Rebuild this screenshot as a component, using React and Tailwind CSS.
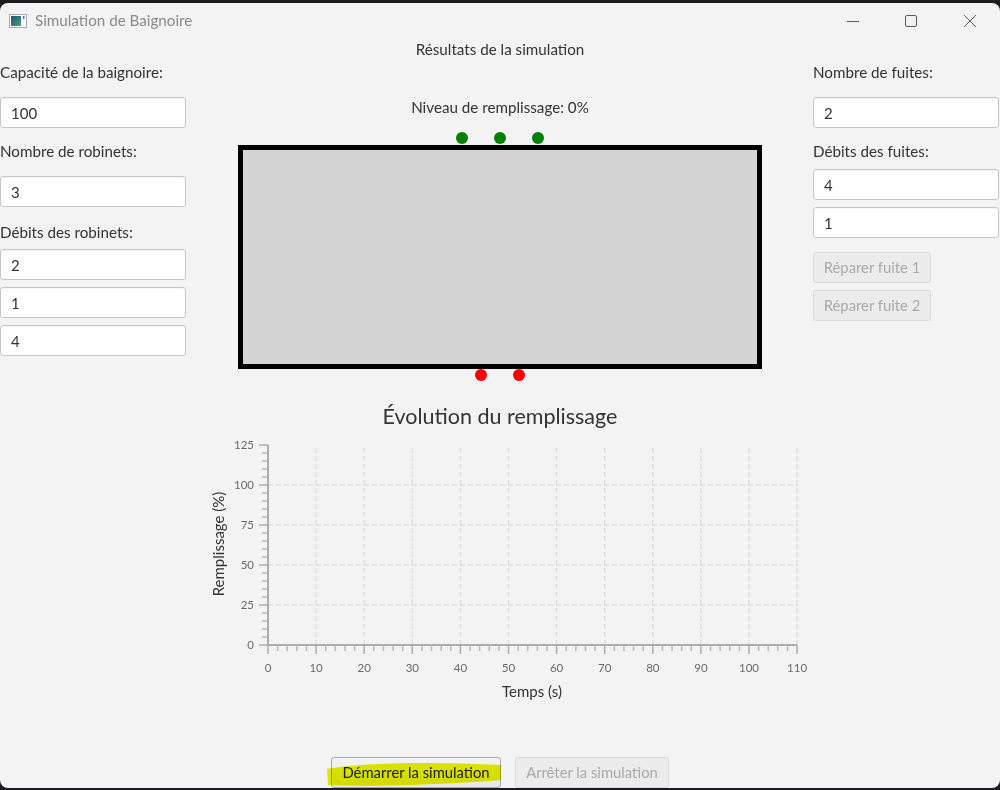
import React from 'react';

const X0 = 81;
const Y0 = 212;
const SX = 4.81;
const SY = 1.6;
const xPos = (v) => X0 + v * SX;
const yPos = (v) => Y0 - v * SY;

const Field = ({ value }) => (
  <input
    readOnly
    value={value}
    className="h-[31px] w-[186px] rounded-[3px] border border-[#c6c6c6] bg-white pl-[10px] text-[15px] text-[#333] shadow-[inset_0_1px_1px_rgba(0,0,0,0.04)] outline-none"
  />
);

const Label = ({ children, className = '' }) => (
  <div className={`h-[20px] text-[15.2px] leading-[20px] text-[#333] ${className}`}>{children}</div>
);

const Dot = ({ color }) => <span className={`block h-[12px] w-[12px] rounded-full ${color}`}></span>;

const DisabledButton = ({ children, className = '' }) => (
  <div
    className={`flex h-[31px] items-center justify-center rounded-[3px] border border-[#dadada] bg-[#ececec] text-[14.8px] text-[#a9a9a9] ${className}`}
  >
    {children}
  </div>
);

const Chart = () => {
  const xMajor = [];
  for (let v = 0; v <= 110; v += 10) xMajor.push(v);
  const xMinor = [];
  for (let v = 0; v <= 110; v += 2) if (v % 10 !== 0) xMinor.push(v);
  const yMajor = [0, 25, 50, 75, 100, 125];
  const yMinor = [];
  for (let v = 0; v <= 125; v += 5) if (v % 25 !== 0) yMinor.push(v);

  return (
    <svg width="626" height="280" className="block">
      {/* grid */}
      {[25, 50, 75, 100].map((v) => (
        <line key={`h${v}`} x1={X0} x2={xPos(110)} y1={yPos(v)} y2={yPos(v)} stroke="#dedede" strokeWidth="1.5" strokeDasharray="5 3" />
      ))}
      {xMajor.slice(1).map((v) => (
        <line key={`v${v}`} x1={xPos(v)} x2={xPos(v)} y1={Y0} y2={yPos(125)} stroke="#dedede" strokeWidth="1.5" strokeDasharray="5 3" />
      ))}

      {/* y axis */}
      <line x1={X0} x2={X0} y1={yPos(125)} y2={Y0 + 1} stroke="#adadad" strokeWidth="2" />
      {yMajor.map((v) => (
        <g key={`ym${v}`}>
          <line x1={X0 - 9} x2={X0} y1={yPos(v)} y2={yPos(v)} stroke="#adadad" strokeWidth="1.5" />
          <text x={67} y={yPos(v) + 4} textAnchor="end" fontSize="11.5" fill="#6a6a6a" fontFamily="Lato, sans-serif">
            {v}
          </text>
        </g>
      ))}
      {yMinor.map((v) => (
        <line key={`yn${v}`} x1={X0 - 6} x2={X0} y1={yPos(v)} y2={yPos(v)} stroke="#b8b8b8" strokeWidth="1.5" />
      ))}

      {/* x axis */}
      <line x1={X0 - 1} x2={xPos(110)} y1={Y0} y2={Y0} stroke="#adadad" strokeWidth="2" />
      {xMajor.map((v) => (
        <g key={`xm${v}`}>
          <line x1={xPos(v)} x2={xPos(v)} y1={Y0} y2={Y0 + 9} stroke="#adadad" strokeWidth="1.5" />
          <text x={xPos(v)} y={239} textAnchor="middle" fontSize="11.5" fill="#6a6a6a" fontFamily="Lato, sans-serif">
            {v}
          </text>
        </g>
      ))}
      {xMinor.map((v) => (
        <line key={`xn${v}`} x1={xPos(v)} x2={xPos(v)} y1={Y0} y2={Y0 + 6} stroke="#b8b8b8" strokeWidth="1.5" />
      ))}

      <text x={345} y={264} textAnchor="middle" fontSize="15" fill="#333" fontFamily="Lato, sans-serif">
        Temps (s)
      </text>
      <text x={32} y={111} textAnchor="middle" fontSize="15" fill="#333" fontFamily="Lato, sans-serif" transform="rotate(-90 32 111)" dy="5">
        Remplissage (%)
      </text>
    </svg>
  );
};

const App = () => {
  return (
    <div className="h-[790px] w-[1000px] overflow-hidden bg-[#1d1d1f] pt-[3px] font-['Lato',sans-serif]">
      <div className="flex h-[785px] flex-col overflow-hidden rounded-[8px] bg-[#f3f3f3]">
        {/* title bar */}
        <div className="flex h-[35px] shrink-0 items-center">
          <svg width="18" height="14" viewBox="0 0 18 14" className="ml-[9px]">
            <defs>
              <linearGradient id="ic" x1="0" y1="0" x2="1" y2="1">
                <stop offset="0" stopColor="#1f5670" />
                <stop offset="1" stopColor="#45a07a" />
              </linearGradient>
            </defs>
            <rect x="0.5" y="0.5" width="17" height="13" fill="#fff" stroke="#a3acb5" />
            <rect x="2" y="2" width="10" height="10" fill="url(#ic)" />
            <rect x="14" y="2" width="1.5" height="3" fill="#3b73c6" />
          </svg>
          <span className="ml-[8px] text-[15.2px] text-[#8a8a8a]">Simulation de Baignoire</span>
          <div className="ml-auto flex items-center">
            <svg width="14" height="14" className="mr-[44px]">
              <line x1="1" x2="13" y1="7.5" y2="7.5" stroke="#5c5c5c" />
            </svg>
            <svg width="14" height="14" className="mr-[45px]">
              <rect x="1.5" y="1.5" width="11" height="11" rx="1.5" fill="none" stroke="#5c5c5c" />
            </svg>
            <svg width="14" height="14" className="mr-[23px]">
              <path d="M1 1 L13 13 M13 1 L1 13" stroke="#5c5c5c" strokeWidth="1" />
            </svg>
          </div>
        </div>

        {/* main */}
        <div className="flex flex-1">
          <div className="flex w-[187px] shrink-0 flex-col">
            <Label className="mt-[24px]">Capacité de la baignoire:</Label>
            <div className="mt-[15px]">
              <Field value="100" />
            </div>
            <Label className="mt-[13px]">Nombre de robinets:</Label>
            <div className="mt-[15px]">
              <Field value="3" />
            </div>
            <Label className="mt-[15px]">Débits des robinets:</Label>
            <div className="mt-[7px] flex flex-col gap-[7px]">
              <Field value="2" />
              <Field value="1" />
              <Field value="4" />
            </div>
          </div>

          <div className="flex flex-1 flex-col items-center">
            <div className="mt-[1px] h-[20px] text-[15.2px] leading-[20px] text-[#333]">Résultats de la simulation</div>
            <div className="mt-[38px] h-[20px] text-[15.2px] leading-[20px] text-[#333]">Niveau de remplissage: 0%</div>
            <div className="mt-[15px] flex gap-[26px]">
              <Dot color="bg-[#008000]" />
              <Dot color="bg-[#008000]" />
              <Dot color="bg-[#008000]" />
            </div>
            <div className="mt-[1px] h-[224px] w-[524px] border-[5px] border-black bg-[#d3d3d3]"></div>
            <div className="flex gap-[26px]">
              <Dot color="bg-[#ff0000]" />
              <Dot color="bg-[#ff0000]" />
            </div>
            <div className="mt-[21px] h-[28px] text-[21.5px] leading-[28px] text-[#333]">Évolution du remplissage</div>
            <div className="mt-[3px]">
              <Chart />
            </div>
          </div>

          <div className="flex w-[187px] shrink-0 flex-col">
            <Label className="mt-[24px]">Nombre de fuites:</Label>
            <div className="mt-[15px]">
              <Field value="2" />
            </div>
            <Label className="mt-[13px]">Débits des fuites:</Label>
            <div className="mt-[8px] flex flex-col gap-[7px]">
              <Field value="4" />
              <Field value="1" />
            </div>
            <div className="mt-[14px] flex flex-col gap-[7px]">
              <DisabledButton className="w-[118px]">Réparer fuite 1</DisabledButton>
              <DisabledButton className="w-[118px]">Réparer fuite 2</DisabledButton>
            </div>
          </div>
        </div>

        {/* bottom buttons */}
        <div className="relative flex h-[31px] shrink-0 justify-center gap-[14px]">
          <div className="flex h-[31px] w-[170px] items-center justify-center rounded-[3px] border border-[#a9a9a9] bg-gradient-to-b from-[#f4f4f4] to-[#e6e6e6] text-[14.8px] text-[#222]">
            Démarrer la simulation
          </div>
          <DisabledButton className="w-[154px]">Arrêter la simulation</DisabledButton>
          <svg width="1000" height="31" className="pointer-events-none absolute left-0 top-0 mix-blend-multiply">
            <path d="M327 12 C360 6 420 4 501 8 L501 23 C450 27 380 30 328 28 Z" fill="#e8f000" />
          </svg>
        </div>
      </div>
    </div>
  );
};

export default App;
